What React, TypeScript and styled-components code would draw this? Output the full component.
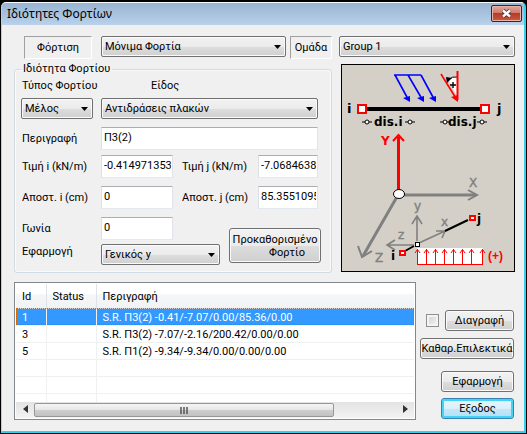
import React from "react";
import styled, { createGlobalStyle } from "styled-components";

const GlobalStyle = createGlobalStyle`
  * { box-sizing: border-box; }
  body {
    margin: 0;
    background: #000;
    color: #000;
    font: 11px/16px Roboto, "Liberation Sans", sans-serif;
  }
  input, select, button { font: inherit; color: inherit; margin: 0; }
`;

const Desktop = styled.div`
  padding: 2px 1px 1px;
`;

const Window = styled.main`
  background: #f0f0f0;
  border: 1px solid #b4cfe9;
  border-top-color: #f4f8fc;
  border-right: 2px solid #35cfee;
  border-bottom: 2px solid #35cfee;
  border-radius: 5px 5px 0 0;
  overflow: hidden;
`;

const TitleBar = styled.header`
  display: flex;
  justify-content: space-between;
  align-items: flex-start;
  height: 22px;
  padding: 2px 2px 0 5px;
  background: linear-gradient(#98b4d2, #b9d1ea);
`;

const Title = styled.h1`
  margin: 0;
  font: 12px/18px "Noto Sans", sans-serif;
`;

const CloseButton = styled.button`
  display: grid;
  place-items: center;
  width: 31px;
  height: 17px;
  padding: 0;
  border: 1px solid #431f26;
  border-radius: 2px;
  background: linear-gradient(#e2a99c 0, #cf7767 48%, #b93a25 50%, #ca5a41 100%);
  box-shadow: inset 0 0 0 1px #e5b5ab;
`;

const Body = styled.form`
  padding: 11px 9px 11px 12px;
`;

const TopRow = styled.div`
  display: flex;
  align-items: flex-start;
  margin-left: 10px;
`;

const SunkenLabel = styled.label<{ $width: number }>`
  width: ${(p) => p.$width}px;
  height: 23px;
  flex: none;
  padding-top: 3px;
  text-align: center;
  border: 1px solid;
  border-color: #a0a0a0 #fff #fff #a0a0a0;
`;

const SelectBox = styled.span<{ $width?: number }>`
  position: relative;
  display: block;
  min-width: 0;
  flex: ${(p) => (p.$width ? "none" : "1")};
  width: ${(p) => (p.$width ? `${p.$width}px` : "auto")};
`;

const Arrow = styled.svg`
  position: absolute;
  right: 5px;
  top: 9px;
  width: 7px;
  height: 4px;
  pointer-events: none;
`;

const StyledSelect = styled.select`
  appearance: none;
  display: block;
  width: 100%;
  height: 21px;
  padding: 0 14px 0 3px;
  border: 1px solid #707070;
  border-radius: 2px;
  background: linear-gradient(#f2f2f2 0, #ebebeb 50%, #dddddd 52%, #cfcfcf 100%);
  box-shadow: inset 0 0 0 1px #fafafa;
`;

const Spacer = styled.span<{ $width: number }>`
  flex: none;
  width: ${(p) => p.$width}px;
`;

const MainRow = styled.div`
  display: grid;
  grid-template-columns: minmax(0, 1fr) 174px;
  gap: 9px;
  margin-top: 2px;
`;

const Group = styled.fieldset`
  min-width: 0;
  margin: 0;
  padding: 0 13px 7px 6px;
  border: 1px solid #d0dbe4;
  border-radius: 3px;
  box-shadow: inset 0 0 0 1px #fafafa;
`;

const Legend = styled.legend`
  padding: 0 2px;
  height: 16px;
`;

const Line = styled.div<{ $top: number }>`
  display: flex;
  align-items: flex-start;
  margin-top: ${(p) => p.$top}px;
`;

const Caption = styled.label<{ $width: number }>`
  flex: none;
  width: ${(p) => p.$width}px;
  padding: 4px 0 0 1px;
  white-space: nowrap;
`;

const Heading = styled(Caption)`
  padding-top: 0;
`;

const TextInput = styled.input<{ $width?: number }>`
  flex: ${(p) => (p.$width ? "none" : "1")};
  width: ${(p) => (p.$width ? `${p.$width}px` : "auto")};
  min-width: 0;
  height: 23px;
  padding: 0 1px 3px 2px;
  border: 1px solid;
  border-color: #abadb3 #e2e3ea #e3e9ef #dbdfe6;
  background: #fff;
`;

const ApplyLines = styled.div`
  flex: none;
  width: 199px;
`;

const Button = styled.button<{ $width?: number; $focused?: boolean }>`
  width: ${(p) => (p.$width ? `${p.$width}px` : "auto")};
  height: 21px;
  padding: 0;
  white-space: nowrap;
  border: 1px solid ${(p) => (p.$focused ? "#3c7fb1" : "#707070")};
  border-radius: 3px;
  background: ${(p) =>
    p.$focused
      ? "linear-gradient(#eaf6fd 0, #d9f0fc 50%, #c4e7f8 52%, #b4dff5 100%)"
      : "linear-gradient(#f2f2f2 0, #ebebeb 50%, #dddddd 52%, #cfcfcf 100%)"};
  box-shadow: inset 0 0 0 ${(p) => (p.$focused ? "2px #43d3f5" : "1px #fafafa")};
`;

const PresetButton = styled(Button)`
  flex: 1;
  height: 35px;
  margin: 11px -3px 0 9px;
  line-height: 13px;
`;

const SecondLine = styled.span`
  display: block;
  padding-left: 24px;
`;

const Diagram = styled.svg`
  display: block;
  width: 174px;
  height: 208px;
  margin-top: 3px;
`;

const BottomRow = styled.div`
  display: flex;
  gap: 4px;
  margin-top: 9px;
`;

const ListView = styled.section`
  display: flex;
  flex-direction: column;
  flex: 1;
  min-width: 0;
  height: 138px;
  padding: 1px;
  border: 1px solid #828790;
  background: #fff;
`;

const TableArea = styled.div`
  flex: 1;
  min-height: 0;
  overflow: hidden;
`;

const Table = styled.table`
  width: 100%;
  table-layout: fixed;
  border-collapse: collapse;
`;

const HeadCell = styled.th<{ $width?: number }>`
  width: ${(p) => (p.$width ? `${p.$width}px` : "auto")};
  height: 24px;
  padding: 2px 0 0 6px;
  text-align: left;
  font-weight: 400;
  background: linear-gradient(#fff 0, #fff 42%, #f5f6f7 44%, #f1f2f4 100%);
  border-right: 1px solid #e0e3e8;
  border-bottom: 1px solid #d5d5d5;
  &:last-child { border-right: 0; }
`;

const Row = styled.tr<{ $selected?: boolean }>`
  color: ${(p) => (p.$selected ? "#fff" : "#000")};
  background: ${(p) => (p.$selected ? "#3399ff" : "#fff")};
  outline: ${(p) => (p.$selected ? "1px dotted #cc6600" : "0")};
  outline-offset: -1px;
`;

const Cell = styled.td`
  height: 17px;
  padding: 1px 0 0 6px;
  line-height: 15px;
  white-space: nowrap;
  border-right: 1px solid #f0f0f0;
  border-bottom: 1px solid #f0f0f0;
  &:last-child { border-right: 0; }
`;

const ScrollBar = styled.div`
  display: flex;
  align-items: center;
  height: 16px;
  flex: none;
  background: linear-gradient(#e3e3e3, #f3f3f3);
`;

const ScrollArrow = styled.button`
  width: 18px;
  height: 16px;
  padding: 0;
  border: 0;
  background: none;
`;

const ScrollTrack = styled.div`
  flex: 1;
`;

const Thumb = styled.div`
  display: grid;
  place-items: center;
  width: 83%;
  height: 14px;
  border: 1px solid #979797;
  border-radius: 2px;
  background: linear-gradient(#f5f5f5 0, #e6e6e6 48%, #cfcfcf 50%, #c2c2c2 100%);
`;

const Actions = styled.div`
  flex: none;
  width: 95px;
  display: flex;
  flex-direction: column;
  align-items: flex-end;
  gap: 6px;
  padding: 28px 1px 0 0;
`;

const ActionLine = styled.div`
  display: flex;
  align-items: center;
  gap: 6px;
  margin-bottom: 1px;
`;

const CheckBox = styled.input`
  appearance: none;
  width: 13px;
  height: 13px;
  border: 1px solid #8e8f8f;
  background: linear-gradient(135deg, #cbcfd5, #f6f6f6);
  box-shadow: inset 0 0 0 2px #f4f4f4;
`;

const ApplyButton = styled(Button)`
  margin-top: 6px;
`;

function Select({ id, value, width }: { id: string; value: string; width?: number }) {
  return (
    <SelectBox $width={width}>
      <StyledSelect id={id} defaultValue={value}>
        <option>{value}</option>
      </StyledSelect>
      <Arrow viewBox="0 0 7 4">
        <path d="M0 0H7L3.5 4Z" />
      </Arrow>
    </SelectBox>
  );
}

function SmallRing({ x, y }: { x: number; y: number }) {
  return (
    <g stroke="#000" fill="#fff">
      <path d={`M${x - 5} ${y}H${x + 5}`} />
      <circle cx={x} cy={y} r="2" />
    </g>
  );
}

function LoadDiagram() {
  const bold = { fontFamily: "DejaVu Sans", fontWeight: 700 };
  const upArrows = [76, 85, 94, 103, 112, 121, 130, 141];
  return (
    <Diagram viewBox="0 0 174 208" role="img" aria-label="Διάγραμμα φορτίων">
      <rect x="0.5" y="0.5" width="173" height="207" fill="#d4d0c8" stroke="#000" />

      <g stroke="#00f" strokeWidth="1.6" fill="none">
        <path d="M53 11H80M54 11L67 35M67 11L81 35M80 11L93 35" />
      </g>
      <g fill="#00f">
        <path d="M62 34L69 32V38Z" />
        <path d="M76 34L83 32V38Z" />
        <path d="M88 34L95 32V38Z" />
      </g>

      <path d="M107 15Q112 12 117 13V34Z" fill="#fff" />
      <path d="M107 16Q111 12 116 13" fill="none" stroke="#000" />
      <path d="M105 13L111 14L106 19Z" />
      <path d="M109 21H115M112 18V24" stroke="#000" strokeWidth="1.4" />
      <g stroke="#f00" fill="none">
        <path d="M116.5 7V36" strokeWidth="2" />
        <path d="M100 10L116 36" strokeWidth="1.6" />
      </g>
      <path d="M110 33L117 31V38Z" fill="#f00" />

      <path d="M25 45H141" stroke="#000" strokeWidth="4" />
      <g fill="#fff" stroke="#f00" strokeWidth="2">
        <rect x="17" y="41" width="8" height="8" />
        <rect x="140" y="41" width="8" height="8" />
      </g>
      <g fontSize="13" style={bold}>
        <text x="6" y="49">i</text>
        <text x="156" y="49">j</text>
        <text x="33" y="62" fontSize="12">dis.i</text>
        <text x="107" y="62" fontSize="12">dis.j</text>
      </g>
      <SmallRing x={26} y={58} />
      <SmallRing x={69} y={58} />
      <SmallRing x={104} y={58} />
      <SmallRing x={141} y={58} />

      <g stroke="#808080" strokeWidth="3" fill="none">
        <path d="M57 131H135M57 131L22 192" />
        <path d="M127 126L136 131L127 136M17 182L21 193L31 187" strokeWidth="2" />
      </g>
      <path d="M57.5 126V73" stroke="#f00" strokeWidth="3" />
      <path d="M52 77L57.5 71L63 77" fill="none" stroke="#f00" strokeWidth="2" />
      <ellipse cx="58" cy="130" rx="5.5" ry="4.5" fill="#fff" stroke="#000" />
      <g fontSize="12" fontFamily="DejaVu Sans">
        <text x="40" y="81" fill="#f00" fontWeight="700">Y</text>
        <g fill="#808080" stroke="#808080" strokeWidth="0.4">
          <text x="128" y="123">X</text>
          <text x="34" y="198">Z</text>
          <text x="73" y="146">y</text>
          <text x="100" y="162">x</text>
          <text x="57" y="175">z</text>
        </g>
      </g>

      <g stroke="#808080" fill="none" strokeWidth="1.6">
        <path d="M76 177V152M71 160L76 152L81 160" />
        <path d="M73 181H47M54 176L46 181L54 186" />
        <path d="M78 179L104 167M95 167L104 167L101 174" />
      </g>
      <path d="M104 167L127 156M73 182L64 187" stroke="#000" strokeWidth="2" />
      <rect x="74.5" y="178.5" width="4" height="4" fill="#fff" stroke="#000" />
      <g fill="#fff" stroke="#f00" strokeWidth="2">
        <rect x="59" y="187" width="5" height="4" />
        <rect x="129" y="152" width="5" height="4" />
      </g>
      <g fontSize="12" style={bold}>
        <text x="136" y="159">j</text>
        <text x="50" y="196">i</text>
      </g>

      <rect x="76" y="184" width="66" height="16" fill="#fff" />
      <g stroke="#f00" fill="none" shapeRendering="crispEdges">
        <path d="M76 200.5H142" />
        {upArrows.map((x) => (
          <path key={x} d={`M${x}.5 185V200`} />
        ))}
      </g>
      <g stroke="#f00" fill="none">
        {upArrows.map((x) => (
          <path key={x} d={`M${x - 2} 189L${x + 0.5} 185.5L${x + 3} 189`} />
        ))}
      </g>
      <text x="147" y="196" fill="#f00" fontSize="12" fontFamily="Liberation Sans" fontWeight="700">(+)</text>
    </Diagram>
  );
}

const rows = [
  { id: "1", text: "S.R. Π3(2) -0.41/-7.07/0.00/85.36/0.00" },
  { id: "3", text: "S.R. Π3(2) -7.07/-2.16/200.42/0.00/0.00" },
  { id: "5", text: "S.R. Π1(2) -9.34/-9.34/0.00/0.00/0.00" },
  { id: "", text: "" },
  { id: "", text: "" },
  { id: "", text: "" },
];

export default function App() {
  return (
    <Desktop>
      <GlobalStyle />
      <Window>
        <TitleBar>
          <Title>Ιδιότητες Φορτίων</Title>
          <CloseButton aria-label="Κλείσιμο">
            <svg width="11" height="9" viewBox="0 0 11 9">
              <path d="M2 1.5L9 7.5M9 1.5L2 7.5" stroke="#4a3038" strokeWidth="4" />
              <path d="M2 1.5L9 7.5M9 1.5L2 7.5" stroke="#fff" strokeWidth="2.4" />
            </svg>
          </CloseButton>
        </TitleBar>
        <Body onSubmit={(e) => e.preventDefault()}>
          <TopRow>
            <SunkenLabel $width={68} htmlFor="loading">Φόρτιση</SunkenLabel>
            <Spacer $width={9} />
            <Select id="loading" value="Μόνιμα Φορτία" />
            <Spacer $width={4} />
            <SunkenLabel $width={42} htmlFor="group">Ομάδα</SunkenLabel>
            <Spacer $width={7} />
            <Select id="group" value="Group 1" width={176} />
          </TopRow>

          <MainRow>
            <Group>
              <Legend>Ιδιότητα Φορτίου</Legend>
              <Line $top={1}>
                <Heading $width={129} htmlFor="type">Τύπος Φορτίου</Heading>
                <Heading $width={40} htmlFor="kind">Είδος</Heading>
              </Line>
              <Line $top={4}>
                <Select id="type" value="Μέλος" width={72} />
                <Spacer $width={8} />
                <Select id="kind" value="Αντιδράσεις πλακών" />
              </Line>
              <Line $top={8}>
                <Caption $width={80} htmlFor="desc">Περιγραφή</Caption>
                <TextInput id="desc" defaultValue="Π3(2)" />
              </Line>
              <Line $top={5}>
                <Caption $width={80} htmlFor="vi">Τιμή i (kN/m)</Caption>
                <TextInput id="vi" $width={72} defaultValue="-0.414971353" />
                <Spacer $width={8} />
                <Caption $width={77} htmlFor="vj">Τιμή j (kN/m)</Caption>
                <TextInput id="vj" defaultValue="-7.0684638" />
              </Line>
              <Line $top={8}>
                <Caption $width={80} htmlFor="di">Αποστ. i (cm)</Caption>
                <TextInput id="di" $width={72} defaultValue="0" />
                <Spacer $width={8} />
                <Caption $width={77} htmlFor="dj">Αποστ. j (cm)</Caption>
                <TextInput id="dj" defaultValue="85.3551095" />
              </Line>
              <Line $top={8}>
                <ApplyLines>
                  <Line $top={0}>
                    <Caption $width={80} htmlFor="angle">Γωνία</Caption>
                    <TextInput id="angle" $width={72} defaultValue="0" />
                  </Line>
                  <Line $top={4}>
                    <Heading $width={80} htmlFor="axis">Εφαρμογή</Heading>
                    <Select id="axis" value="Γενικός y" />
                  </Line>
                </ApplyLines>
                <PresetButton type="button">
                  Προκαθορισμένο
                  <SecondLine>Φορτίο</SecondLine>
                </PresetButton>
              </Line>
            </Group>
            <LoadDiagram />
          </MainRow>

          <BottomRow>
            <ListView>
              <TableArea>
                <Table>
                  <thead>
                    <tr>
                      <HeadCell $width={30}>Id</HeadCell>
                      <HeadCell $width={50}>Status</HeadCell>
                      <HeadCell>Περιγραφή</HeadCell>
                    </tr>
                  </thead>
                  <tbody>
                    {rows.map((row, i) => (
                      <Row key={i} $selected={i === 0}>
                        <Cell>{row.id}</Cell>
                        <Cell />
                        <Cell>{row.text}</Cell>
                      </Row>
                    ))}
                  </tbody>
                </Table>
              </TableArea>
              <ScrollBar>
                <ScrollArrow type="button" aria-label="Αριστερά">
                  <svg width="5" height="8" viewBox="0 0 5 8"><path d="M5 0V8L0 4Z" fill="#333" /></svg>
                </ScrollArrow>
                <ScrollTrack>
                  <Thumb>
                    <svg width="9" height="7" viewBox="0 0 9 7">
                      <path d="M1 0V7M4 0V7M7 0V7" stroke="#555" strokeWidth="1.5" />
                    </svg>
                  </Thumb>
                </ScrollTrack>
                <ScrollArrow type="button" aria-label="Δεξιά">
                  <svg width="5" height="8" viewBox="0 0 5 8"><path d="M0 0V8L5 4Z" fill="#333" /></svg>
                </ScrollArrow>
              </ScrollBar>
            </ListView>
            <Actions>
              <ActionLine>
                <CheckBox type="checkbox" aria-label="Διαγραφή" />
                <Button type="button" $width={69}>Διαγραφή</Button>
              </ActionLine>
              <Button type="button" $width={94}>Καθαρ.Επιλεκτικά</Button>
              <ApplyButton type="button" $width={73}>Εφαρμογή</ApplyButton>
              <Button type="button" $width={73} $focused>Εξοδος</Button>
            </Actions>
          </BottomRow>
        </Body>
      </Window>
    </Desktop>
  );
}
